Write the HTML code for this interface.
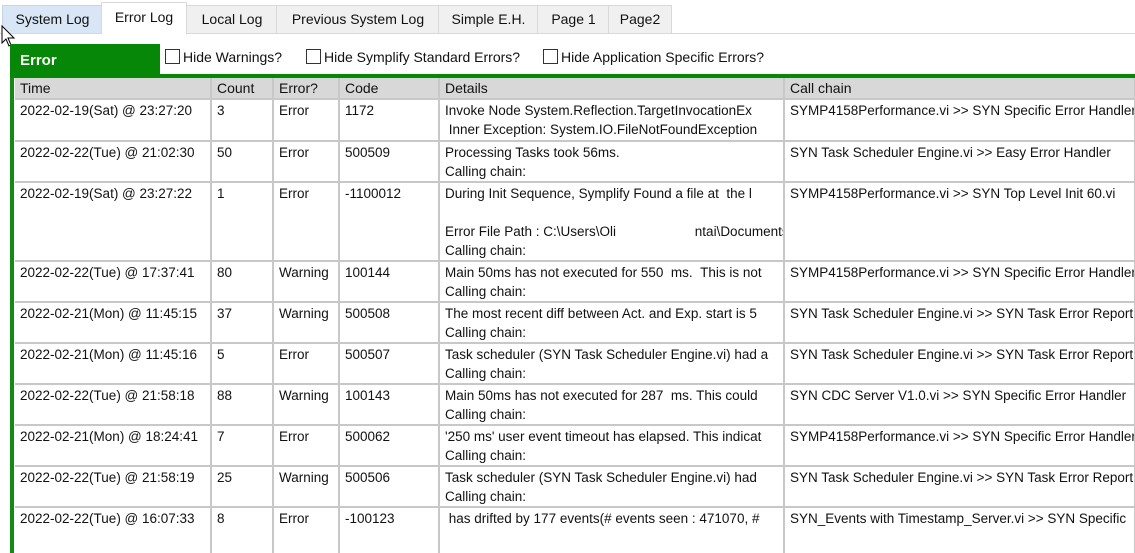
<!DOCTYPE html>
<html><head><meta charset="utf-8"><style>
html,body{margin:0;width:1135px;height:553px;overflow:hidden}
body{background:#fff;font-family:"Liberation Sans",sans-serif;font-size:13.5px;color:#111;position:relative}
.tabbar{position:absolute;left:0;top:0;width:1135px;height:33px;border-bottom:1px solid #d9d9d9}
.tab{position:absolute;top:5px;height:27px;background:#f0f0f0;border:1px solid #d9d9d9;border-bottom:none;line-height:27px;text-align:center;font-size:14px}
.tab.sel{top:2px;height:31px;background:#fff;line-height:28px}
.tab.hov{background:#d8e6f5;border-color:#c5d6ea}
.gl{position:absolute;left:10px;top:44px;width:4px;height:509px;background:#138a13}
.gh{position:absolute;left:10px;top:44px;width:150px;height:31px;background:#078707;color:#fff;font-weight:bold;font-size:15px;line-height:33px;padding-left:10px;box-sizing:border-box}
.gt{position:absolute;left:10px;top:74px;width:1125px;height:4px;background:#078707}
.cb{position:absolute;top:49px;font-size:14px;line-height:16px}
.cb i{display:inline-block;width:13px;height:13px;border:1px solid #333;vertical-align:-2px;margin-right:3px;background:#fff}
.tbl{position:absolute;left:15px;top:78px;width:1120px;height:475px;overflow:hidden}
table{border-collapse:collapse;table-layout:fixed;width:1120px}
td,th{border:1px solid #c8c8c8;border-width:0 2px 2px 0;padding:1px 0 0 5px;vertical-align:top;white-space:nowrap;overflow:hidden;text-align:left;font-weight:normal;line-height:19px;font-size:13.5px;box-sizing:border-box}
th{background:#d8d8d8;height:21px;font-size:14px}
td{padding-top:1px;height:41px}
tr.a td{height:42px}
tr.b td{height:79px}
tr.c td{height:46px;border-bottom:0}
</style></head><body>
<div class="tabbar"></div>
<div class="tab hov" style="left:2px;width:99px">System Log</div>
<div class="tab sel" style="left:101px;width:84px">Error Log</div>
<div class="tab" style="left:186px;width:90px">Local Log</div>
<div class="tab" style="left:276px;width:162px">Previous System Log</div>
<div class="tab" style="left:438px;width:99px">Simple E.H.</div>
<div class="tab" style="left:537px;width:71px">Page 1</div>
<div class="tab" style="left:608px;width:62px">Page2</div>
<svg style="position:absolute;left:0;top:25px" width="18" height="24" viewBox="0 0 18 24"><path d="M2 1 L2 18 L6 14 L9 21 L11 20 L8 13 L14 13 Z" fill="#fff" stroke="#000" stroke-width="1"/></svg>
<div class="gl"></div>
<div class="gh">Error</div>
<div class="gt"></div>
<div class="cb" style="left:165px"><i></i>Hide Warnings?</div>
<div class="cb" style="left:306px"><i></i>Hide Symplify Standard Errors?</div>
<div class="cb" style="left:543px"><i></i>Hide Application Specific Errors?</div>
<div class="tbl"><table>
<colgroup><col style="width:196px"><col style="width:62px"><col style="width:66px"><col style="width:100px"><col style="width:345px"><col style="width:351px"></colgroup>
<tr><th>Time</th><th>Count</th><th>Error?</th><th>Code</th><th>Details</th><th>Call chain</th></tr>
<tr class="a"><td>2022-02-19(Sat) @ 23:27:20</td><td>3</td><td>Error</td><td>1172</td><td>Invoke Node System.Reflection.TargetInvocationEx<br>&nbsp;Inner Exception: System.IO.FileNotFoundException</td><td>SYMP4158Performance.vi &gt;&gt; SYN Specific Error Handler</td></tr>
<tr><td>2022-02-22(Tue) @ 21:02:30</td><td>50</td><td>Error</td><td>500509</td><td>Processing Tasks took 56ms.<br>Calling chain:</td><td>SYN Task Scheduler Engine.vi &gt;&gt; Easy Error Handler</td></tr>
<tr class="b"><td>2022-02-19(Sat) @ 23:27:22</td><td>1</td><td>Error</td><td>-1100012</td><td>During Init Sequence, Symplify Found a file at &nbsp;the l<br><br>Error File Path : C:\Users\Oli&nbsp;&nbsp;&nbsp;&nbsp;&nbsp;&nbsp;&nbsp;&nbsp;&nbsp;&nbsp;&nbsp;&nbsp;&nbsp;&nbsp;&nbsp;&nbsp;&nbsp;&nbsp;&nbsp;&nbsp;&nbsp;ntai\Documents<br>Calling chain:</td><td>SYMP4158Performance.vi &gt;&gt; SYN Top Level Init 60.vi</td></tr>
<tr><td>2022-02-22(Tue) @ 17:37:41</td><td>80</td><td>Warning</td><td>100144</td><td>Main 50ms has not executed for 550 &nbsp;ms. &nbsp;This is not<br>Calling chain:</td><td>SYMP4158Performance.vi &gt;&gt; SYN Specific Error Handler</td></tr>
<tr><td>2022-02-21(Mon) @ 11:45:15</td><td>37</td><td>Warning</td><td>500508</td><td>The most recent diff between Act. and Exp. start is 5<br>Calling chain:</td><td>SYN Task Scheduler Engine.vi &gt;&gt; SYN Task Error Report</td></tr>
<tr><td>2022-02-21(Mon) @ 11:45:16</td><td>5</td><td>Error</td><td>500507</td><td>Task scheduler (SYN Task Scheduler Engine.vi) had a<br>Calling chain:</td><td>SYN Task Scheduler Engine.vi &gt;&gt; SYN Task Error Report</td></tr>
<tr><td>2022-02-22(Tue) @ 21:58:18</td><td>88</td><td>Warning</td><td>100143</td><td>Main 50ms has not executed for 287 &nbsp;ms. This could<br>Calling chain:</td><td>SYN CDC Server V1.0.vi &gt;&gt; SYN Specific Error Handler</td></tr>
<tr><td>2022-02-21(Mon) @ 18:24:41</td><td>7</td><td>Error</td><td>500062</td><td>'250 ms' user event timeout has elapsed. This indicat<br>Calling chain:</td><td>SYMP4158Performance.vi &gt;&gt; SYN Specific Error Handler</td></tr>
<tr><td>2022-02-22(Tue) @ 21:58:19</td><td>25</td><td>Warning</td><td>500506</td><td>Task scheduler (SYN Task Scheduler Engine.vi) had<br>Calling chain:</td><td>SYN Task Scheduler Engine.vi &gt;&gt; SYN Task Error Report</td></tr>
<tr class="c"><td>2022-02-22(Tue) @ 16:07:33</td><td>8</td><td>Error</td><td>-100123</td><td>&nbsp;has drifted by 177 events(# events seen : 471070, #</td><td>SYN_Events with Timestamp_Server.vi &gt;&gt; SYN Specific</td></tr>
</table></div>
</body></html>
